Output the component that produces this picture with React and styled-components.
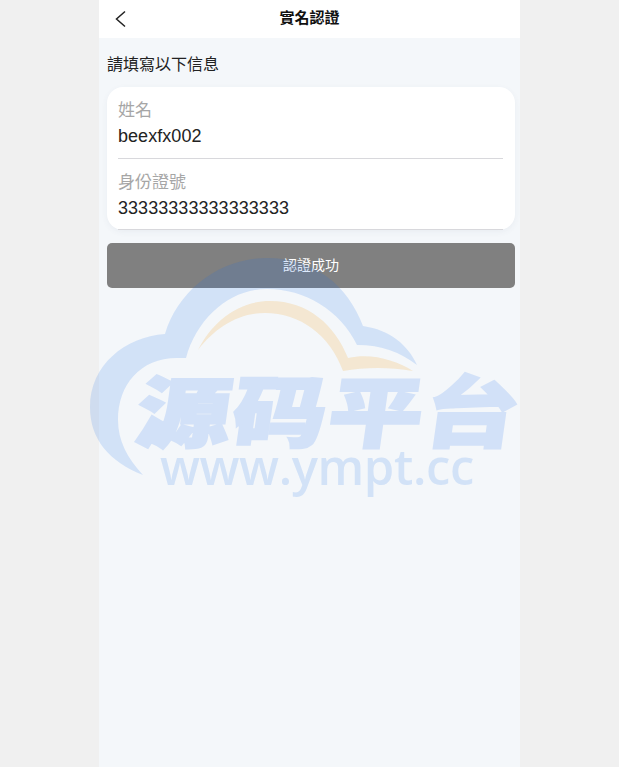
import React from 'react';
import styled, { createGlobalStyle } from 'styled-components';

const GlobalStyle = createGlobalStyle`
  html, body {
    margin: 0;
    padding: 0;
    height: 100%;
    overflow: hidden;
    background: #f0f0f0;
  }
`;

const Page = styled.div`
  position: relative;
  width: 619px;
  height: 767px;
  font-family: "Liberation Sans", "Noto Sans CJK TC", sans-serif;
`;

const Phone = styled.div`
  width: 421px;
  height: 767px;
  margin-left: 99px;
  background: #f4f7fa;
`;

const Header = styled.header`
  display: flex;
  align-items: center;
  justify-content: center;
  position: relative;
  height: 38px;
  padding-bottom: 5px;
  background: #fff;
  box-sizing: border-box;
`;

const BackIcon = styled.svg`
  position: absolute;
  left: 15px;
  top: 10px;
  width: 14px;
  height: 18px;
`;

const Title = styled.h1`
  margin: 0;
  font-size: 15px;
  font-weight: 700;
  color: #111;
`;

const Content = styled.main`
  padding: 0 5px 0 8px;
`;

const Hint = styled.p`
  margin: 0;
  padding-top: 18px;
  height: 49px;
  line-height: 18px;
  font-size: 16px;
  color: #222;
  box-sizing: border-box;
`;

const Card = styled.section`
  height: 143px;
  padding: 0 12px 0 11px;
  background: #fff;
  border-radius: 16px;
  box-shadow: 0 2px 6px rgba(60, 80, 120, 0.06);
  box-sizing: border-box;
`;

const Field = styled.div`
  height: 72px;
  padding-top: 12px;
  border-bottom: 1px solid #d8d8dc;
  box-sizing: border-box;

  & + & {
    height: 71px;
  }
`;

const Label = styled.div`
  height: 24px;
  line-height: 24px;
  font-size: 17px;
  color: #a6a6a6;
`;

const Value = styled.div`
  height: 26px;
  line-height: 26px;
  font-size: 18px;
  letter-spacing: 0.05px;
  color: #222;
`;

const Button = styled.button`
  display: block;
  width: 100%;
  height: 45px;
  margin-top: 13px;
  padding: 0 0 4px;
  border: 0;
  border-radius: 5px;
  background: #808080;
  color: #fff;
  font-family: inherit;
  font-size: 14px;
`;

const Watermark = styled.div`
  position: absolute;
  left: 0;
  top: 0;
  width: 619px;
  height: 767px;
  pointer-events: none;
`;

const Cloud = styled.svg`
  position: absolute;
  left: 0;
  top: 0;
`;

const BrandName = styled.div`
  position: absolute;
  left: 144px;
  top: 364px;
  width: 382px;
  display: flex;
  justify-content: space-between;
  font-family: "Noto Sans CJK SC", sans-serif;
  font-size: 94px;
  line-height: 106px;
  font-weight: 900;
  color: rgb(23, 106, 237);
  -webkit-text-stroke: 3px rgb(23, 106, 237);
  opacity: 0.15;
  transform: skewX(-8deg) scaleY(0.82);
  transform-origin: left top;
`;

const BrandUrl = styled.div`
  position: absolute;
  left: 160px;
  top: 436px;
  font-family: "Open Sans", sans-serif;
  font-size: 49px;
  font-weight: 600;
  letter-spacing: -0.4px;
  line-height: 60px;
  color: rgba(23, 106, 237, 0.15);
`;

export default function App() {
  return (
    <Page>
      <GlobalStyle />
      <Phone>
        <Header>
          <BackIcon viewBox="0 0 14 18" fill="none" stroke="#222" strokeWidth="1.5">
            <path d="M11 1.5 L2.5 9 L11 16.5" />
          </BackIcon>
          <Title>實名認證</Title>
        </Header>
        <Content>
          <Hint>請填寫以下信息</Hint>
          <Card>
            <Field>
              <Label>姓名</Label>
              <Value>beexfx002</Value>
            </Field>
            <Field>
              <Label>身份證號</Label>
              <Value>33333333333333333</Value>
            </Field>
          </Card>
          <Button>認證成功</Button>
        </Content>
      </Phone>
      <Watermark>
        <Cloud width="619" height="767" viewBox="0 0 619 767">
          <path
            fill="rgba(23, 106, 237, 0.15)"
            d="M143 475 C110 462 90 440 90 407 C90 365 125 337 165 334 C178 290 220 258 267 258 C315 258 347 285 363 326 C390 330 408 345 417 365 C400 352 382 345 357 345 C340 310 305 289 267 289 C230 289 197 318 186 358 L177 358 C140 358 118 385 118 420 C118 440 127 458 143 475 Z"
          />
          <path
            fill="rgba(245, 160, 30, 0.18)"
            d="M198 350 C212 322 238 301 270 301 C308 301 335 325 348 358 C372 353 395 360 413 371 C390 367 365 367 343 371 C330 335 300 313 265 313 C238 313 215 328 198 350 Z"
          />
        </Cloud>
        <BrandName>
          <span>源</span>
          <span>码</span>
          <span>平</span>
          <span>台</span>
        </BrandName>
        <BrandUrl>www.ympt.cc</BrandUrl>
      </Watermark>
    </Page>
  );
}
